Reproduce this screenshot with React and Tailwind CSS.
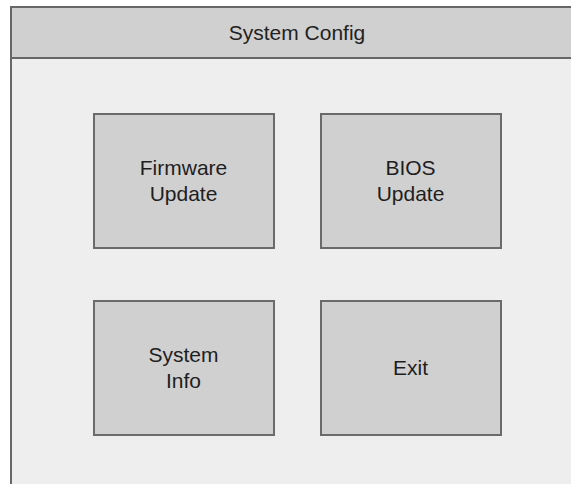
import React from 'react';

const buttons = [
  ['Firmware', 'Update'],
  ['BIOS', 'Update'],
  ['System', 'Info'],
  ['Exit'],
];

const App = () => {
  return (
    <div className="w-[571px] h-[484px] overflow-hidden bg-white" style={{ fontFamily: '"Liberation Sans", Arial, sans-serif' }}>
      <div className="ml-[10px] mt-[6px] w-[574px] h-[500px] border-2 border-[#676767] bg-[#eeeeee] flex flex-col">
        <div className="h-[51px] bg-[#d0d0d0] border-b-2 border-[#676767] flex items-center justify-center text-[21px] text-[#222]">
          System Config
        </div>
        <div className="pt-[54px] grid grid-cols-[182px_182px] auto-rows-[136px] gap-x-[45px] gap-y-[51px] justify-center">
          {buttons.map((lines, i) => (
            <div key={i}
              className="bg-[#d0d0d0] border-2 border-[#6a6a6a] flex flex-col items-center justify-center text-[21px] leading-[26px] text-[#1e1e1e]">
              {lines.map((l) => <span key={l}>{l}</span>)}
            </div>
          ))}
        </div>
      </div>
    </div>
  );
};

export default App;
